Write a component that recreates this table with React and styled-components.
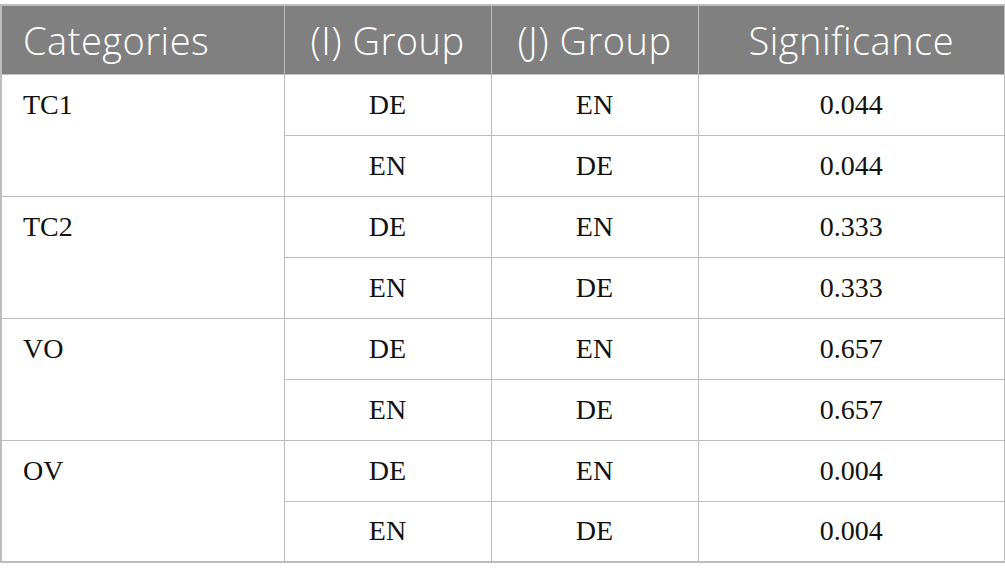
import React from "react";
import styled, { createGlobalStyle } from "styled-components";

const Global = createGlobalStyle`
  html, body { margin: 0; padding: 0; background: #fff; }
`;

const Page = styled.div`
  padding-top: 4px;
  width: 1005px;
`;

const Table = styled.table`
  border-collapse: collapse;
  width: 1004px;
  table-layout: fixed;
  border: 2px solid #bdbdbd;
`;

const HeadCell = styled.th`
  background: #808080;
  color: #fff;
  font-family: "Open Sans", sans-serif;
  font-weight: 300;
  font-size: 38px;
  letter-spacing: 0.5px;
  line-height: 1;
  height: 69px;
  padding: 0 0 0 ${(p) => (p.$left ? "21px" : "0")};
  text-align: ${(p) => (p.$left ? "left" : "center")};
  border: 1px solid #bdbdbd;
  box-sizing: border-box;
  white-space: nowrap;
`;

const Cell = styled.td`
  font-family: "Liberation Serif", serif;
  font-size: 28px;
  color: #111;
  height: 61px;
  box-sizing: border-box;
  padding: 0;
  text-align: center;
  vertical-align: middle;
  border: 1px solid #bdbdbd;
`;

const CatCell = styled(Cell)`
  text-align: left;
  vertical-align: top;
  padding: 14px 0 0 21px;
`;

const data = [
  ["TC1", "0.044"],
  ["TC2", "0.333"],
  ["VO", "0.657"],
  ["OV", "0.004"],
];

export default function App() {
  return (
    <Page>
      <Global />
      <Table>
        <colgroup>
          <col style={{ width: 283 }} />
          <col style={{ width: 207 }} />
          <col style={{ width: 207 }} />
          <col style={{ width: 307 }} />
        </colgroup>
        <thead>
          <tr>
            <HeadCell $left>Categories</HeadCell>
            <HeadCell>(I) Group</HeadCell>
            <HeadCell>(J) Group</HeadCell>
            <HeadCell>Significance</HeadCell>
          </tr>
        </thead>
        <tbody>
          {data.map(([cat, sig]) => (
            <React.Fragment key={cat}>
              <tr>
                <CatCell rowSpan={2}>{cat}</CatCell>
                <Cell>DE</Cell>
                <Cell>EN</Cell>
                <Cell>{sig}</Cell>
              </tr>
              <tr>
                <Cell>EN</Cell>
                <Cell>DE</Cell>
                <Cell>{sig}</Cell>
              </tr>
            </React.Fragment>
          ))}
        </tbody>
      </Table>
    </Page>
  );
}
